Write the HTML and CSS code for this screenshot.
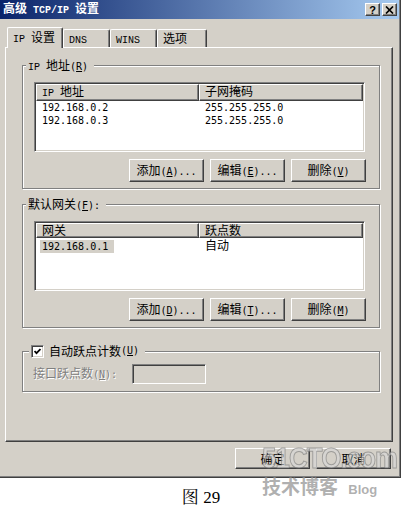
FILE: index.html
```html
<!DOCTYPE html>
<html>
<head>
<meta charset="utf-8">
<link rel="stylesheet" href="styles.css">
</head>
<body>
<div class="window">
  <div class="titlebar">
    <span class="title">高级<span class="s"> TCP/IP </span>设置</span>
    <div class="tbtns">
      <div class="tbtn">?</div>
      <div class="tbtn"><svg width="9" height="8" viewBox="0 0 9 8"><path d="M1 0.5 L8 7.5 M8 0.5 L1 7.5" stroke="#000" stroke-width="1.7" fill="none"/></svg></div>
    </div>
  </div>
  <div class="tabs">
    <div class="tab sel"><span class="s">IP </span>设置</div>
    <div class="tab w47"><span class="s">DNS</span></div>
    <div class="tab w47"><span class="s">WINS</span></div>
    <div class="tab w50">选项</div>
  </div>
  <div class="panel">
    <fieldset class="group">
      <legend><span class="s">IP </span>地址<span class="l">(<u>R</u>)</span></legend>
      <div class="gbody">
        <div class="list">
          <div class="lhead"><div class="hc"><span class="s">IP </span>地址</div><div class="hc">子网掩码</div></div>
          <div class="lrow"><div class="c"><span class="l">192.168.0.2</span></div><div class="c"><span class="l">255.255.255.0</span></div></div>
          <div class="lrow"><div class="c"><span class="l">192.168.0.3</span></div><div class="c"><span class="l">255.255.255.0</span></div></div>
        </div>
        <div class="btnrow">
          <button class="btn">添加<span class="l">(<u>A</u>)...</span></button>
          <button class="btn">编辑<span class="l">(<u>E</u>)...</span></button>
          <button class="btn">删除<span class="l">(<u>V</u>)</span></button>
        </div>
      </div>
    </fieldset>
    <fieldset class="group g2">
      <legend>默认网关<span class="l">(<u>F</u>):</span></legend>
      <div class="gbody">
        <div class="list">
          <div class="lhead"><div class="hc">网关</div><div class="hc">跃点数</div></div>
          <div class="lrow"><div class="c"><span class="l hl">192.168.0.1</span></div><div class="c">自动</div></div>
        </div>
        <div class="btnrow">
          <button class="btn">添加<span class="l">(<u>D</u>)...</span></button>
          <button class="btn">编辑<span class="l">(<u>T</u>)...</span></button>
          <button class="btn">删除<span class="l">(<u>M</u>)</span></button>
        </div>
      </div>
    </fieldset>
    <fieldset class="group g3">
      <legend class="cblegend"><span class="cb"><svg width="7" height="7" viewBox="0 0 7 7"><path d="M0.5 3 L2.5 5.2 L6.5 1" stroke="#000" stroke-width="1.8" fill="none"/></svg></span>自动跃点计数<span class="l">(<u>U</u>)</span></legend>
      <div class="gbody3">
        <span class="dis">接口跃点数<span class="l">(<u>N</u>):</span></span>
        <div class="input"></div>
      </div>
    </fieldset>
  </div>
  <div class="footer">
    <button class="btn fbtn">确定</button>
    <button class="btn fbtn">取消</button>
  </div>
</div>
<div class="caption">图 <span class="num">29</span></div>
<div class="wm">
  <div class="wm1">51CTO.com</div>
  <div class="wm2">技术博客 <span class="blog">Blog</span></div>
</div>
</body>
</html>
```
FILE: styles.css
```css
* { box-sizing: border-box; }
html, body { margin: 0; padding: 0; background: #fff; }
body {
  font-family: "Noto Sans CJK SC", sans-serif;
  font-size: 12px;
  line-height: 14px;
  color: #000;
  width: 402px;
  height: 510px;
  overflow: hidden;
  position: relative;
}
.l { font-family: "DejaVu Sans Mono", monospace; font-size: 10px; }
.s { font-family: "Liberation Mono", monospace; font-size: 10px; white-space: pre; }
u { text-decoration: underline; text-underline-offset: 1px; }

.window {
  width: 401px;
  height: 478px;
  background: #d4d0c8;
  border-right: 1px solid #404040;
  border-bottom: 1px solid #404040;
  box-shadow: inset -1px -1px #808080;
  display: flex;
  flex-direction: column;
}
.titlebar {
  height: 19px;
  margin-right: 1px;
  background: linear-gradient(to right, #0a246a, #a6caf0);
  display: flex;
  align-items: center;
  justify-content: space-between;
  padding: 0 2px 0 3px;
}
.title { color: #fff; font-weight: bold; }
.title .s { font-weight: bold; }
.tbtns { display: flex; gap: 2px; }
.tbtn {
  width: 15px;
  height: 13px;
  background: #d4d0c8;
  border: 1px solid;
  border-color: #fff #404040 #404040 #fff;
  box-shadow: inset -1px -1px #808080;
  display: flex;
  align-items: center;
  justify-content: center;
  font: bold 11px "Liberation Sans", sans-serif;
}

.tabs {
  margin-top: 8px;
  height: 20px;
  display: flex;
  align-items: flex-end;
  padding-left: 7px;
}
.tab {
  height: 18px;
  border-top: 1px solid #fff;
  border-left: 1px solid #fff;
  border-right: 1px solid #404040;
  box-shadow: inset -1px 0 #808080;
  border-radius: 2px 2px 0 0;
  padding-left: 5px;
  line-height: 16px;
  background: #d4d0c8;
}
.tab.sel {
  width: 56px;
  height: 21px;
  margin-bottom: -1px;
  position: relative;
  z-index: 1;
  line-height: 18px;
}
.w47 { width: 47px; }
.w50 { width: 50px; }

.panel {
  margin-left: 5px;
  width: 388px;
  height: 395px;
  border-top: 1px solid #fff;
  border-left: 1px solid #fff;
  border-right: 1px solid #404040;
  border-bottom: 1px solid #404040;
  box-shadow: inset -1px -1px #808080;
  padding: 10px 12px 0 16px;
}
.group {
  margin: 0;
  padding: 0;
  min-width: 0;
  border: 1px solid #808080;
  box-shadow: inset 1px 1px #fff, 1px 1px #fff;
}
.group legend {
  margin-left: 3px;
  padding: 0 6px 0 2px;
  line-height: 14px;
  height: 14px;
  background: #d4d0c8;
}
.g2 { margin-top: 8px; }
.g3 { margin-top: 16px; }
.gbody { padding: 10px 14px 6px 11px; }

.list {
  height: 70px;
  background: #fff;
  border: 1px solid;
  border-color: #808080 #fff #fff #808080;
  box-shadow: inset 1px 1px #404040, inset -1px -1px #d4d0c8;
  padding: 1px;
}
.lhead {
  display: grid;
  grid-template-columns: 163px 1fr;
  height: 15px;
}
.hc {
  background: #d4d0c8;
  border-top: 1px solid #fff;
  border-left: 1px solid #fff;
  border-right: 1px solid #404040;
  border-bottom: 1px solid #404040;
  box-shadow: inset -1px -1px #808080;
  padding-left: 5px;
  line-height: 12px;
}
.lrow {
  display: grid;
  grid-template-columns: 163px 1fr;
  height: 13px;
  line-height: 13px;
}
.c { padding-left: 6px; }
.hl { background: #d4d0c8; margin-left: -2px; padding: 0 6px 0 2px; display: inline-block; line-height: 13px; }

.btnrow {
  display: flex;
  justify-content: flex-end;
  gap: 6px;
  margin-top: 7px;
  margin-right: -1px;
}
.btn {
  width: 75px;
  height: 23px;
  padding: 0;
  background: #d4d0c8;
  border: 1px solid;
  border-color: #fff #404040 #404040 #fff;
  box-shadow: inset -1px -1px #808080;
  font: inherit;
  color: #000;
  line-height: 19px;
  text-align: center;
}

.cblegend { display: flex; align-items: center; margin-left: 6px !important; }
.cb {
  width: 13px;
  height: 13px;
  margin-right: 5px;
  background: #fff;
  border: 1px solid;
  border-color: #808080 #fff #fff #808080;
  box-shadow: inset 1px 1px #404040, inset -1px -1px #d4d0c8;
  display: flex;
  align-items: center;
  justify-content: center;
}
.gbody3 {
  display: flex;
  align-items: center;
  padding: 6px 0 7px 10px;
}
.dis {
  width: 99px;
  color: #808080;
  text-shadow: 1px 1px #fff;
}
.input {
  width: 74px;
  height: 20px;
  background: #d4d0c8;
  border: 1px solid;
  border-color: #808080 #fff #fff #808080;
  box-shadow: inset 1px 1px #404040, inset -1px -1px #d4d0c8;
}

.footer {
  display: flex;
  justify-content: flex-end;
  gap: 6px;
  margin-top: 6px;
  padding-right: 9px;
}
.fbtn { height: 21px; line-height: 17px; }

.caption {
  padding-top: 8px;
  text-align: center;
  font-family: "Noto Serif CJK SC", "Noto Sans CJK SC", serif;
  font-size: 17px;
  line-height: 20px;
}
.caption .num { font-family: "Liberation Serif", serif; }

.wm {
  position: absolute;
  left: 262px;
  top: 443px;
  pointer-events: none;
}
.wm1 {
  font: bold 30px/30px "Liberation Sans", sans-serif;
  color: rgba(215, 215, 215, 0.6);
  -webkit-text-stroke: 1px rgba(110, 110, 110, 0.55);
  transform: scaleX(0.86);
  transform-origin: left center;
  letter-spacing: -1px;
}
.wm2 {
  margin-top: 2px;
  font: bold 19px/22px "Noto Sans CJK SC", sans-serif;
  color: rgba(150, 150, 150, 0.75);
}
.blog { font: bold 13px "Liberation Sans", sans-serif; margin-left: 6px; }
```
